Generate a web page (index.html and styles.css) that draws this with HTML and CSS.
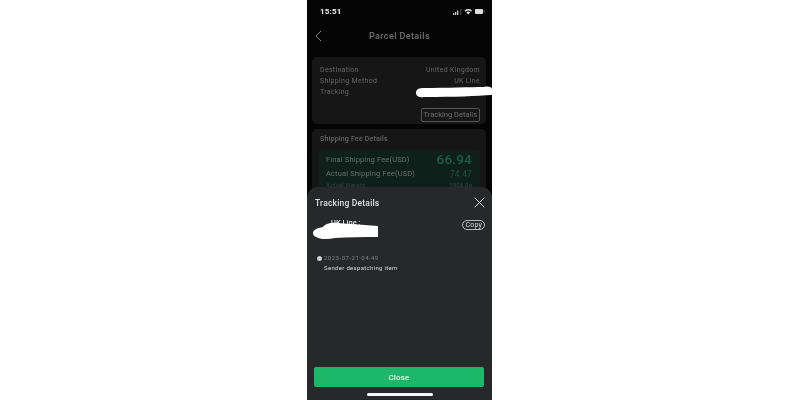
FILE: index.html
```html
<!DOCTYPE html>
<html lang="en">
  <head>
    <meta charset="UTF-8" />
    <meta name="viewport" content="width=device-width, initial-scale=1.0" />
    <title>Parcel Details</title>
    <link rel="stylesheet" href="styles.css">
  </head>
  <body>
    <div class="phone">
      <div class="status-bar">
        <span class="time">15:51</span>
        <svg class="status-icons" width="32" height="7" viewBox="0 0 32 7">
          <rect x="0" y="5" width="1.3" height="2" fill="#ccc"/>
          <rect x="2" y="4" width="1.3" height="3" fill="#ccc"/>
          <rect x="4" y="2.5" width="1.3" height="4.5" fill="#ccc"/>
          <rect x="7" y="1" width="1.3" height="6" fill="#444"/>
          <path d="M11.5 2.6a5.5 5.5 0 0 1 7.5 0l-1 1.1a4 4 0 0 0-5.5 0zM13.3 4.5a2.7 2.7 0 0 1 3.9 0l-1.95 2.1z" fill="#ddd"/>
          <rect x="22" y="1" width="8" height="5" rx="1" fill="#ddd"/>
          <rect x="30.6" y="2.7" width="0.9" height="1.6" fill="#888"/>
        </svg>
      </div>

      <header class="nav">
        <svg class="back" width="7" height="12" viewBox="0 0 7 12">
          <path d="M6 1 1 6l5 5" fill="none" stroke="#888" stroke-width="1"/>
        </svg>
        <h1>Parcel Details</h1>
      </header>

      <section class="card parcel-card">
        <div class="row"><span>Destination</span><span>United Kingdom</span></div>
        <div class="row"><span>Shipping Method</span><span>UK Line</span></div>
        <div class="row"><span>Tracking</span></div>
        <div class="track-wrap"><span class="track-btn">Tracking Details</span></div>
      </section>

      <section class="card fee-card">
        <h2>Shipping Fee Details</h2>
        <div class="fee-box">
          <div class="fee-row"><span>Final Shipping Fee(USD)</span><span class="fee-big">66.94</span></div>
          <div class="fee-row"><span>Actual Shipping Fee(USD)</span><span class="fee-mid">74.47</span></div>
          <div class="fee-row fee-small"><span>Actual Weight</span><span>1905.0g</span></div>
        </div>
      </section>

      <!-- scribble over the tracking number -->
      <svg class="scribble scribble-top" width="76" height="12" viewBox="0 0 76 12">
        <path d="M0 7C0 3 3 2 8 2 30 2 55 1 68 1 72 0 76 1 76 3V9C60 10 40 11 8 11 3 12 0 10 0 7z" fill="#fff"/>
      </svg>

      <div class="sheet">
        <div class="sheet-head">
          <h3>Tracking Details</h3>
          <svg class="close-x" width="11" height="11" viewBox="0 0 11 11">
            <path d="M.7.7l9.6 9.6M10.3.7.7 10.3" fill="none" stroke="#ddd" stroke-width="1"/>
          </svg>
        </div>
        <div class="line-row">
          <span class="line-name">UK Line :</span>
          <span class="copy">Copy</span>
        </div>
        <div class="event">
          <div class="event-date"><i class="dot"></i>2023-07-21 04:49</div>
          <div class="event-text">Sender despatching item</div>
        </div>
        <button class="close-btn">Close</button>
        <div class="home-bar"></div>

        <svg class="scribble scribble-sheet" width="65" height="18" viewBox="0 0 65 18">
          <path d="M0 11C0 8 4 6 10 5 12 2 18 0 24 1 38 2 52 3 65 4V15C50 15 35 15 22 16 14 18 6 17 3 15 1 14 0 13 0 11z" fill="#fff"/>
        </svg>
      </div>
    </div>
  </body>
</html>
```

FILE: styles.css
```css
* {
  box-sizing: border-box;
}
html,
body {
  margin: 0;
  height: 100%;
  background-color: white;
}
body {
  display: flex;
  justify-content: center;
  font-family: "Roboto", "Liberation Sans", sans-serif;
}
.phone {
  position: relative;
  width: 185px;
  height: 400px;
  margin-right: 1px;
  overflow: hidden;
  background-color: #050505;
  filter: blur(0.3px);
}
.status-bar {
  display: flex;
  justify-content: space-between;
  align-items: center;
  height: 22px;
  padding: 0 7px 0 13px;
}
.time {
  color: #f0f0f0;
  font-size: 8px;
  font-weight: bold;
  letter-spacing: 0.2px;
}
.nav {
  position: relative;
  display: flex;
  justify-content: center;
  align-items: center;
  height: 28px;
}
.nav h1 {
  margin: 0;
  color: #6f6f6f;
  font-size: 9px;
  font-weight: 500;
  letter-spacing: 0.4px;
}
.back {
  position: absolute;
  left: 8px;
  top: 8px;
}
.card {
  margin: 0 6px 5px 5px;
  border-radius: 5px;
  background-color: #161616;
}
.parcel-card {
  height: 67px;
  margin-top: 7px;
  padding: 8px 6px 0 8px;
}
.row {
  display: flex;
  justify-content: space-between;
  height: 11px;
  color: #666;
  font-size: 7px;
  line-height: 11px;
  letter-spacing: 0.3px;
}
.track-wrap {
  display: flex;
  justify-content: flex-end;
  margin-top: 10px;
}
.track-btn {
  padding: 0 2px;
  height: 14px;
  border: 1px solid #555;
  border-radius: 2px;
  color: #707070;
  font-size: 7.5px;
  line-height: 12px;
}
.fee-card {
  height: 70px;
  padding: 6px 6px 6px 7px;
}
.fee-card h2 {
  margin: 0 0 6px 1px;
  color: #666;
  font-size: 7px;
  font-weight: 500;
  line-height: 9px;
  letter-spacing: 0.2px;
}
.fee-box {
  height: 60px;
  padding: 1px 8px 2px 7px;
  border-radius: 3px;
  background-color: #0f1f19;
}
.fee-row {
  display: flex;
  justify-content: space-between;
  align-items: center;
  height: 13px;
  color: #66706c;
  font-size: 7.5px;
  letter-spacing: 0.15px;
}
.fee-row:first-child {
  height: 16px;
}
.fee-big {
  color: #1a5e43;
  font-size: 13.5px;
  font-weight: 500;
  letter-spacing: 0.2px;
}
.fee-mid {
  color: #17573d;
  font-size: 8.5px;
}
.fee-small {
  height: 9px;
  color: #3a4440;
  font-size: 6px;
}
.scribble {
  position: absolute;
}
.scribble-top {
  left: 109px;
  top: 86px;
}
.sheet {
  position: absolute;
  left: 0;
  right: 0;
  top: 187px;
  bottom: 0;
  display: flex;
  flex-direction: column;
  padding: 0 7px;
  border-radius: 11px 11px 0 0;
  background-color: #27282a;
}
.sheet-head {
  display: flex;
  justify-content: space-between;
  align-items: center;
  height: 30px;
  padding: 1px 0 0 1px;
}
.sheet-head h3 {
  margin: 0;
  color: #e0e0e0;
  font-size: 8.5px;
  font-weight: 500;
  letter-spacing: 0.2px;
}
.line-row {
  display: flex;
  justify-content: space-between;
  align-items: flex-start;
  height: 36px;
  padding-top: 1px;
}
.line-name {
  margin-left: 17px;
  color: #e0e0e0;
  font-size: 7.5px;
  font-weight: 500;
  line-height: 9px;
}
.copy {
  margin-top: 2px;
  padding: 0 2px;
  height: 10px;
  border: 1px solid #bbb;
  border-radius: 5px;
  color: #ddd;
  font-size: 7px;
  line-height: 8px;
  letter-spacing: 0.2px;
}
.event {
  margin-left: 3px;
}
.event-date {
  display: flex;
  align-items: center;
  color: #808080;
  font-size: 6px;
  line-height: 10px;
  letter-spacing: 0.5px;
}
.dot {
  width: 5px;
  height: 5px;
  margin-right: 2px;
  border-radius: 50%;
  background-color: #ccc;
}
.event-text {
  margin-left: 7px;
  color: #d8d8d8;
  font-size: 6px;
  line-height: 9px;
  letter-spacing: 0.32px;
}
.close-btn {
  margin-top: auto;
  width: 170px;
  height: 20px;
  padding: 0;
  border: none;
  border-radius: 2px;
  background-color: #1cb768;
  color: #e6f5ec;
  font-family: inherit;
  font-size: 8px;
  font-weight: 500;
  letter-spacing: 0.2px;
}
.home-bar {
  align-self: center;
  width: 66px;
  height: 3px;
  margin: 6px 0 4px;
  border-radius: 2px;
  background-color: #f5f5f5;
}
.scribble-sheet {
  left: 6px;
  top: 35px;
}
```
